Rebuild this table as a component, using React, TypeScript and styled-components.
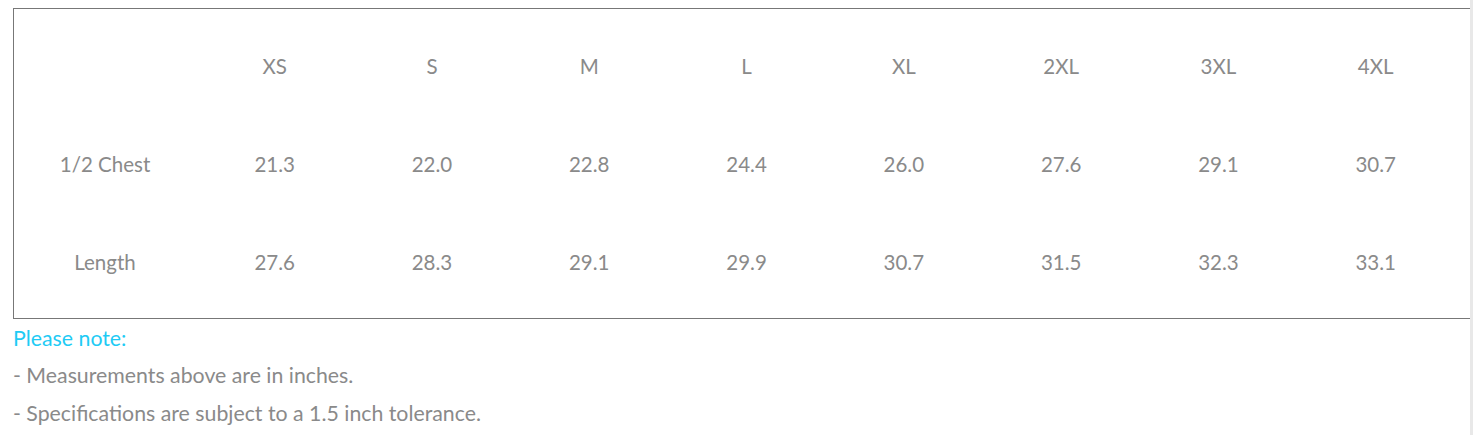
import React from 'react';
import styled, { createGlobalStyle } from 'styled-components';

const GlobalStyle = createGlobalStyle`
  html, body {
    margin: 0;
    padding: 0;
    background: #fff;
  }
  body {
    font-family: Lato, "Open Sans", sans-serif;
    color: #8a8a8a;
  }
`;

const sizes = ['XS', 'S', 'M', 'L', 'XL', '2XL', '3XL', '4XL'];

const rows = [
  { label: '1/2 Chest', values: ['21.3', '22.0', '22.8', '24.4', '26.0', '27.6', '29.1', '30.7'] },
  { label: 'Length', values: ['27.6', '28.3', '29.1', '29.9', '30.7', '31.5', '32.3', '33.1'] },
];

export default function App() {
  return (
    <>
      <GlobalStyle />
      <Page>
        <Content>
          <Chart>
            <Row>
              <Cell />
              {sizes.map((s) => (
                <Cell key={s}>{s}</Cell>
              ))}
            </Row>
            {rows.map((r) => (
              <Row key={r.label}>
                <Cell>{r.label}</Cell>
                {r.values.map((v, i) => (
                  <Cell key={i}>{v}</Cell>
                ))}
              </Row>
            ))}
          </Chart>
          <Notes>
            <NoteTitle>Please note:</NoteTitle>
            <Note>- Measurements above are in inches.</Note>
            <Note>- Specifications are subject to a 1.5 inch tolerance.</Note>
          </Notes>
        </Content>
        <Scrollbar />
      </Page>
    </>
  );
}

const Page = styled.div`
  display: flex;
  height: 435px;
  overflow: hidden;
`;

const Content = styled.div`
  flex: 1;
  min-width: 0;
  overflow: hidden;
  padding: 8px 0 0 13px;
`;

const Scrollbar = styled.div`
  width: 3px;
  background: #e8e8e8;
`;

const Chart = styled.div`
  width: 1470px;
  border: 1px solid #777;
  padding: 8px 0 7px;
`;

const Row = styled.div`
  display: grid;
  grid-template-columns: 182px repeat(8, 157.3px);
  height: 98px;
  align-items: center;
`;

const Cell = styled.div`
  text-align: center;
  font-size: 20.5px;
  color: #8a8a8a;
`;

const Notes = styled.div`
  padding-top: 7px;
`;

const NoteTitle = styled.div`
  font-size: 21.3px;
  color: #1ecbf5;
  line-height: 24px;
  margin-bottom: 13px;
`;

const Note = styled.div`
  font-size: 21.3px;
  color: #8a8a8a;
  line-height: 24px;
  margin-bottom: 14px;
`;
